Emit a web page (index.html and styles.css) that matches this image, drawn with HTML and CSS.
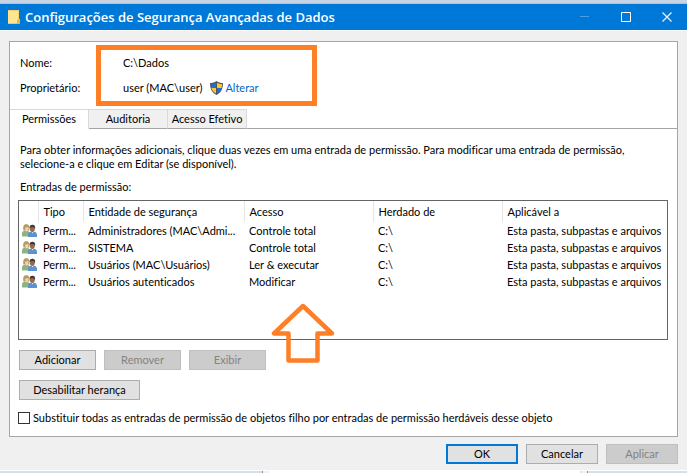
FILE: index.html
```html
<!DOCTYPE html>
<html lang="pt-BR">
 <head>
  <meta charset="utf-8">
  <title>Configurações de Segurança Avançadas de Dados</title>
  <link rel="stylesheet" href="styles.css">
 </head>
 <body>
  <svg class="defs" aria-hidden="true">
   <symbol id="users" viewBox="0 0 15 13">
    <path d="M0 12.500V9.500C0 7.500 1.500 6.500 4 6.500S8 8 8 10v2.500z" fill="#8db384"/>
    <path d="M1.500 6.500C.5 2 2 .3 4.500.3S8 2.500 7.200 6.500z" fill="#b39b62"/>
    <path d="M3.200 3.500c1.500.2 2.500-.6 3.200-.5.300 2.500-.6 4.500-1.700 4.500S3 5.700 3.200 3.500z" fill="#f1d3ad"/>
    <path d="M6 13v-2.500C6 8.300 7.800 7.500 10.500 7.500S15 8.500 15 11v2z" fill="#5c92d0"/>
    <path d="M9.300 7.500h2.500L10.500 9.600z" fill="#dce9f7"/>
    <ellipse cx="10.300" cy="4.500" rx="2.500" ry="3.400" fill="#9a6a48"/>
    <path d="M7.600 4C7.500 1.500 9 .5 10.800.7c2 .2 2.800 1.800 2.200 4.500-.5-1-.8-1.900-1.600-2.200-1.400.3-2.800 0-3.800 1z" fill="#3f3a3c"/>
   </symbol>
  </svg>

  <div class="strip strip-top"></div>

  <div class="titlebar">
   <svg class="folder" viewBox="0 0 12 14" width="12" height="14">
    <path d="M0 0h11v9h1v5H0z" fill="#ffe590"/>
    <path d="M.5.500h10v9.500" fill="none" stroke="#f5d36a"/>
    <path d="M9 14V9.500h3V14z" fill="#e2b84b"/>
    <path d="M0 13.500h9" stroke="#edc95f"/>
   </svg>
   <h1>Configurações de Segurança Avançadas de Dados</h1>
   <div class="winbtns">
    <button type="button" aria-label="Minimizar" disabled><svg viewBox="0 0 10 10" width="10" height="10"><path d="M0 4.500h9" stroke="#4c9fe5"/></svg></button>
    <button type="button" aria-label="Maximizar"><svg viewBox="0 0 10 10" width="10" height="10"><path d="M.5.500h9v9h-9z" fill="none" stroke="#fff"/></svg></button>
    <button type="button" aria-label="Fechar"><svg viewBox="0 0 10 10" width="10" height="10"><path d="M.5.500l9 9M9.500.500l-9 9" stroke="#e6f2fc" stroke-width="1.300"/></svg></button>
   </div>
  </div>

  <div class="window">
   <div class="sheet">
    <dl class="info">
     <dt>Nome:</dt>
     <dd>C:\Dados</dd>
     <dt>Proprietário:</dt>
     <dd>user (MAC\user)
      <svg class="shield" viewBox="0 0 13 14" width="13" height="14">
       <path d="M6.500 0C8.500 1.500 10.500 2 13 2c0 6-2 9.800-6.500 12C2 11.800 0 8 0 2 2.500 2 4.500 1.500 6.500 0z" fill="#4a5560"/>
       <path d="M6 1.700V7H1.400C1.100 5.700 1 4.400 1 3c2 0 3.700-.4 5-1.300z" fill="#1f6fd0"/>
       <path d="M7 1.700V7h4.600c.3-1.300.4-2.600.4-4-2 0-3.700-.4-5-1.300z" fill="#ffc62b"/>
       <path d="M6 7v5.600C3.600 11.300 2.100 9.500 1.400 7z" fill="#ffc62b"/>
       <path d="M7 7v5.600c2.400-1.300 3.900-3.100 4.600-5.600z" fill="#1f6fd0"/>
      </svg>
      <a href="#">Alterar</a>
     </dd>
    </dl>
    <div class="mark-box"></div>

    <div class="tabs" role="tablist">
     <button type="button" class="tab active" role="tab" aria-selected="true">Permissões</button>
     <button type="button" class="tab" role="tab" aria-selected="false">Auditoria</button>
     <button type="button" class="tab" role="tab" aria-selected="false">Acesso Efetivo</button>
    </div>

    <div class="page">
     <p class="help">Para obter informações adicionais, clique duas vezes em uma entrada de permissão. Para modificar uma entrada de permissão, selecione-a e clique em Editar (se disponível).</p>
     <p class="caption" id="entries">Entradas de permissão:</p>

     <div class="list">
      <table aria-labelledby="entries">
       <colgroup><col class="c-icon"><col class="c-type"><col class="c-name"><col class="c-access"><col class="c-from"><col></colgroup>
       <thead>
        <tr><th></th><th>Tipo</th><th>Entidade de segurança</th><th>Acesso</th><th>Herdado de</th><th>Aplicável a</th></tr>
       </thead>
       <tbody>
        <tr><td><svg class="users"><use href="#users"/></svg></td><td>Perm...</td><td>Administradores (MAC\Admi...</td><td>Controle total</td><td>C:\</td><td>Esta pasta, subpastas e arquivos</td></tr>
        <tr><td><svg class="users"><use href="#users"/></svg></td><td>Perm...</td><td>SISTEMA</td><td>Controle total</td><td>C:\</td><td>Esta pasta, subpastas e arquivos</td></tr>
        <tr><td><svg class="users"><use href="#users"/></svg></td><td>Perm...</td><td>Usuários (MAC\Usuários)</td><td>Ler &amp; executar</td><td>C:\</td><td>Esta pasta, subpastas e arquivos</td></tr>
        <tr><td><svg class="users"><use href="#users"/></svg></td><td>Perm...</td><td>Usuários autenticados</td><td>Modificar</td><td>C:\</td><td>Esta pasta, subpastas e arquivos</td></tr>
       </tbody>
      </table>
      <svg class="mark-arrow" viewBox="0 0 64 60" width="64" height="60">
       <path d="M32 3L3 30.500h14.500V57.500h29V30.500H61z" fill="none" stroke="#ff7f27" stroke-width="4.500" stroke-linejoin="round"/>
      </svg>
     </div>

     <div class="row">
      <button type="button" class="btn">Adicionar</button>
      <button type="button" class="btn" disabled>Remover</button>
      <button type="button" class="btn" disabled>Exibir</button>
     </div>
     <div class="row">
      <button type="button" class="btn wide">Desabilitar herança</button>
     </div>
     <label class="check"><input type="checkbox"> Substituir todas as entradas de permissão de objetos filho por entradas de permissão herdáveis desse objeto</label>
    </div>
   </div>

   <div class="footer">
    <button type="button" class="btn default">OK</button>
    <button type="button" class="btn">Cancelar</button>
    <button type="button" class="btn" disabled>Aplicar</button>
   </div>
  </div>

  <div class="strip strip-bottom"><span class="s-left"></span><span class="s-mid"></span><span class="s-right"></span></div>
 </body>
</html>
```
FILE: styles.css
```css
* { box-sizing: border-box; }
body {
    margin: 0;
    background: #f0f0f0;
    color: #000;
    font: 11px/14px Lato, "Open Sans", sans-serif;
    font-variant-ligatures: none;
    overflow: hidden;
}
h1, p, dl, dd { margin: 0; }
button, input { font: inherit; font-variant-ligatures: none; color: inherit; }
svg { display: block; }
.defs { position: absolute; width: 0; height: 0; }

.strip-top { height: 4px; background: #c8d3e3; border-bottom: 1px solid #a9c4e0; }
.strip-bottom { height: 3px; display: flex; gap: 6px; border-top: 1px solid #fff; }
.s-left { flex: 0 0 263px; background: #d3e0ec; border-right: 1px solid #8c98a5; }
.s-mid { flex: 1; background: #fff; border-right: 1px solid #ddd; }
.s-right { flex: 0 0 100px; background: #d3e0ec; border-left: 1px solid #8c98a5; }

/* title bar */
.titlebar {
    display: flex;
    align-items: center;
    height: 26px;
    padding-left: 8px;
    background: #0078d7;
    color: #fff;
}
.titlebar h1 { margin-left: 5px; font: 600 13px/18px "Open Sans", sans-serif; white-space: nowrap; }
.winbtns { display: flex; margin-left: auto; }
.winbtns button {
    display: flex;
    align-items: center;
    justify-content: center;
    width: 41px;
    height: 26px;
    padding: 0;
    border: 0;
    background: none;
}

.window { padding: 10px 9px 6px; border-top: 1px solid #fff; }
.sheet { position: relative; background: #fff; border: 1px solid #a5a5a5; }

/* name and owner */
.info {
    display: grid;
    grid-template-columns: 103px 1fr;
    row-gap: 11px;
    padding: 14px 10px;
    height: 67px;
}
.info dd { display: flex; align-items: center; }
.info a { color: #0066cc; text-decoration: none; }
.shield { margin: 0 2px 0 8px; }

.mark-box {
    position: absolute;
    left: 86px;
    top: 3px;
    width: 221px;
    height: 61px;
    border: 5px solid #ff7f27;
}

/* tabs */
.tabs { display: flex; height: 20px; }
.tabs::after { content: ""; flex: 1; border-bottom: 1px solid #a5a5a5; }
.tab {
    width: 79px;
    padding: 0;
    border: 1px solid #d9d9d9;
    border-left: 0;
    border-bottom-color: #a5a5a5;
    background: #f0f0f0;
    white-space: nowrap;
}
.tab.active { border-bottom-color: #fff; background: #fff; }

.page { padding: 14px 9px 11px; }
.help, .caption { padding: 0 1px; }
.help { padding-right: 30px; }
.caption { margin: 9px 0 6px; }

/* permission entries */
.list { position: relative; height: 140px; margin-left: -1px; border: 1px solid #646464; }
.list table { width: 100%; table-layout: fixed; border-collapse: collapse; }
.c-icon { width: 19px; }
.c-type { width: 45px; }
.c-name { width: 161px; }
.c-access { width: 129px; }
.c-from { width: 129px; }
.list th, .list td { height: 17px; padding: 0 0 0 5px; text-align: left; font-weight: normal; white-space: nowrap; }
.list th { height: 21px; border-right: 1px solid #e5e5e5; }
.list th:last-child { border-right: 0; }
.list td:first-child { padding: 0 0 0 3px; }
.users { width: 15px; height: 13px; }
.mark-arrow { position: absolute; left: 252px; top: 102px; }

/* buttons */
.row { display: flex; gap: 8px; margin-top: 10px; }
.btn { width: 77px; height: 20px; padding: 0; background: #e1e1e1; border: 1px solid #adadad; }
.btn:disabled { background: #ccc; border-color: #bfbfbf; color: #838383; }
.btn.wide { width: 121px; }
.btn.default { border: 2px solid #0078d7; }

.check { display: flex; align-items: center; gap: 3px; margin: 11px 0 0 -1px; }
.check input {
    appearance: none;
    width: 12px;
    height: 12px;
    margin: 0;
    border: 1px solid #333;
    background: #fff;
}

.footer { display: flex; justify-content: flex-end; gap: 8px; margin-top: 7px; }
.footer .btn { width: 72px; }
```
